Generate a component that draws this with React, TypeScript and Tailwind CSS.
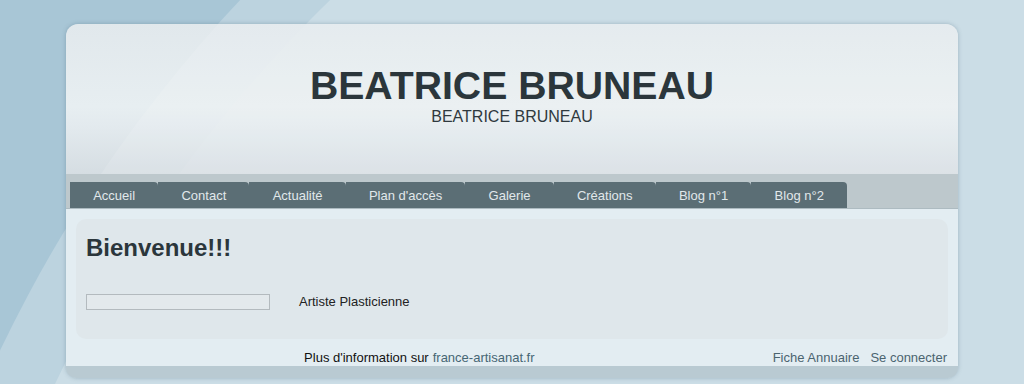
import React from "react";

const tabs = ["Accueil", "Contact", "Actualité", "Plan d'accès", "Galerie", "Créations", "Blog n°1", "Blog n°2"];

export default function App() {
  return (
    <div
      className="relative w-full h-[384px] overflow-hidden bg-[#cbdde6]"
      style={{ fontFamily: '"Liberation Sans", Arial, sans-serif' }}
    >
      <svg className="absolute inset-0" width="1024" height="384" aria-hidden="true">
        <rect x="0" y="0" width="1024" height="384" fill="#a8c6d6" />
        <circle cx="1235" cy="939" r="1368" fill="#bcd3df" />
        <circle cx="1235" cy="939" r="1304" fill="#cbdde6" />
      </svg>

      <div className="relative pt-[24px]">
        <div className="mx-auto w-[892px] rounded-[12px] shadow-[0_0_4px_rgba(70,100,120,0.35)]">
          {/* Header */}
          <div className="relative h-[150px] rounded-t-[12px] overflow-hidden bg-[linear-gradient(to_bottom,#e1e8ec_0%,#e7eef1_55%,#e3eaee_68%,#d5dde2_100%)]">
            <svg className="absolute inset-0" width="892" height="150" aria-hidden="true">
              <circle cx="1169" cy="915" r="1368" fill="#ffffff" fillOpacity="0.12" />
              <circle cx="1169" cy="915" r="1304" fill="#ffffff" fillOpacity="0.06" />
            </svg>
            <div className="relative flex flex-col items-center pt-[40px]">
              <h1 className="text-[39.2px] leading-[44px] font-bold text-[#2b363b]">BEATRICE BRUNEAU</h1>
              <div className="text-[16px] leading-[18px] text-[#2f393e]">BEATRICE BRUNEAU</div>
            </div>
          </div>

          {/* Nav */}
          <div className="h-[35px] bg-[#bdc8cc] border-b border-[#adbbc1] px-[4px] flex items-end">
            {tabs.map((t) => (
              <div
                key={t}
                className="h-[26px] px-[23.2px] pt-[1px] flex items-center bg-[#5b6e75] rounded-tr-[4px] text-[13px] text-[#e1e8eb]"
              >
                {t}
              </div>
            ))}
          </div>

          {/* Content */}
          <div className="bg-[#e3edf2] px-[10px] pt-[10px]">
            <div className="h-[120px] rounded-[10px] bg-[#dfe7eb] px-[10px] pt-[15px]">
              <h2 className="text-[24px] leading-[28px] font-bold text-[#2b363b]">Bienvenue!!!</h2>
              <div className="mt-[32px] flex items-center">
                <div className="w-[184px] h-[16px] border border-[#b3babe] bg-[#e3e9ec]" />
                <div className="ml-[29px] text-[13px] leading-[16px] text-[#222]">Artiste Plasticienne</div>
              </div>
            </div>
            <div className="h-[27px] pt-[11px] flex text-[13px] leading-[16px]">
              <div className="flex-1 flex justify-center pr-[10px]">
                <span className="text-[#111]">Plus d'information sur</span>
                <span className="ml-[4px] text-[#466674]">france-artisanat.fr</span>
              </div>
              <div className="flex gap-[11px] text-[#4b6470] pr-[1px]">
                <span>Fiche Annuaire</span>
                <span>Se connecter</span>
              </div>
            </div>
          </div>

          {/* Bottom band */}
          <div className="h-[12px] bg-[#b9cad2] rounded-b-[10px]" />
        </div>
      </div>
    </div>
  );
}
